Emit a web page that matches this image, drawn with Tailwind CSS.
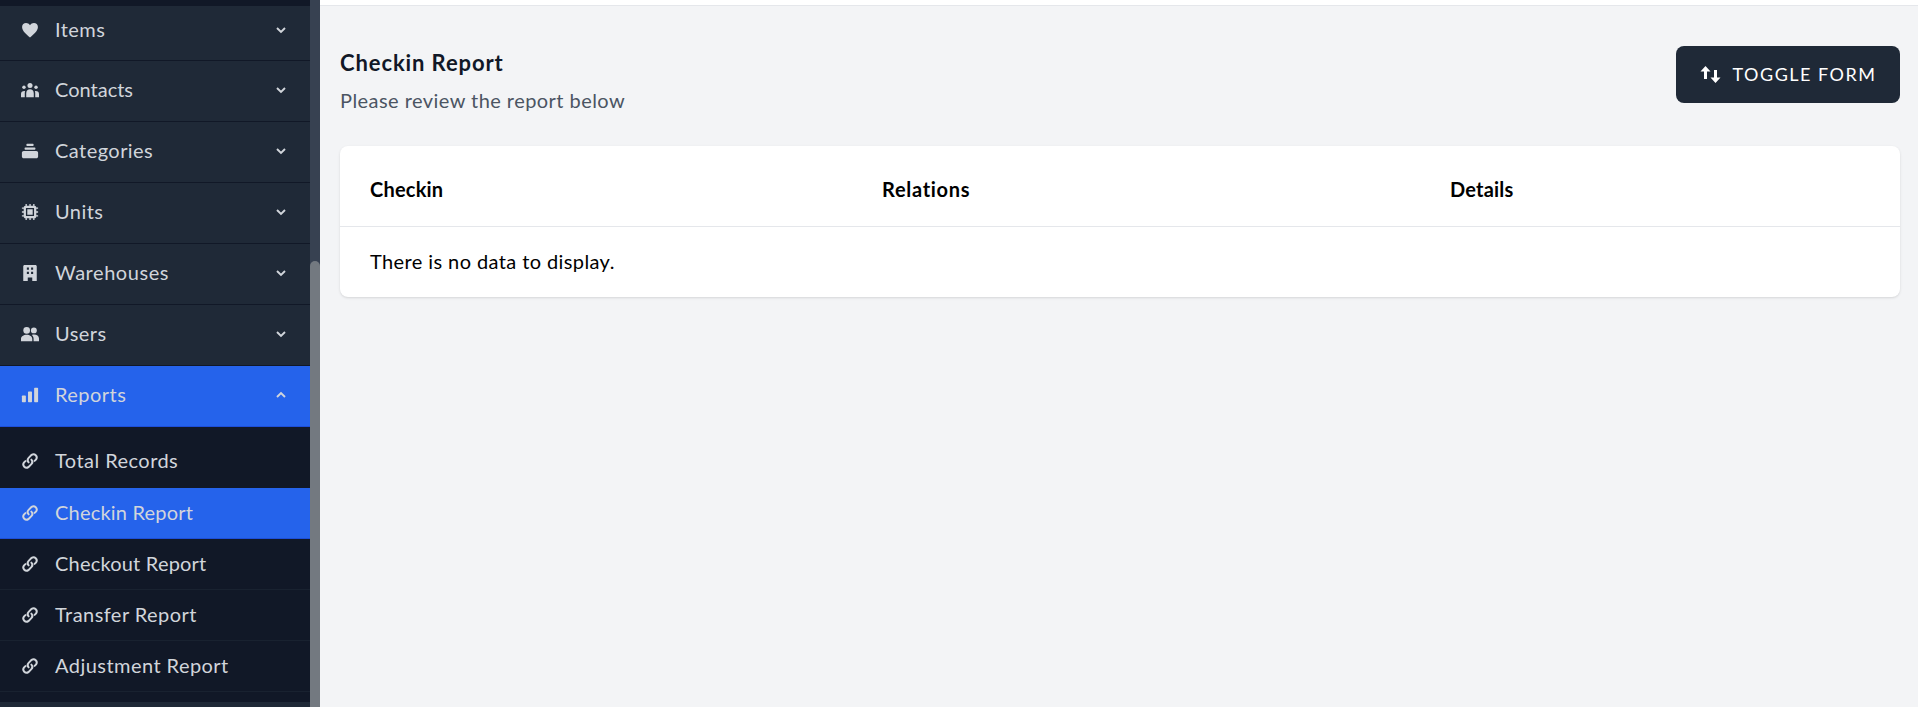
<!DOCTYPE html>
<html>
<head>
<meta charset="utf-8">
<script src="https://cdn.jsdelivr.net/npm/@tailwindcss/browser@4"></script>
</head>
<body class="h-[707px] w-[1918px] overflow-hidden bg-[#f3f4f6] font-['Lato','Open_Sans',sans-serif]">
<div class="flex h-[707px]">
  <aside class="flex h-full w-[320px] shrink-0">
    <nav class="flex h-full w-[310px] flex-col bg-[#1f2937] text-[20px] tracking-[0.45px] text-[#d1d5db]">
      <div class="h-[6px] bg-[#111827]"></div>
      <a class="flex h-[55px] items-center border-b border-[#111827] pb-[6px] pl-[21px] pr-[21px]">
        <svg class="h-[18px] w-[18px] shrink-0" viewBox="0 0 20 20" fill="currentColor"><path d="M1.2 6.6c0-2.6 2-4.4 4.4-4.4 1.8 0 3.4.9 4.4 2.4 1-1.5 2.6-2.4 4.4-2.4 2.4 0 4.4 1.8 4.4 4.4 0 4.8-5.3 8.6-8.8 11.6C6.500 15.200 1.200 11.400 1.200 6.600z"/></svg>
        <span class="ml-[16px] grow pb-[2px]">Items</span>
        <svg class="h-[16px] w-[16px]" viewBox="0 0 20 20" fill="none" stroke="currentColor" stroke-width="2.4"><path d="M5 7.500l5 5 5-5"/></svg>
      </a>
      <a class="flex h-[61px] items-center border-b border-[#111827] pb-[2px] pl-[21px] pr-[21px]">
        <svg class="h-[18px] w-[18px] shrink-0" viewBox="0 0 20 20" fill="currentColor"><circle cx="10" cy="5" r="2.800"/><circle cx="3.300" cy="7" r="1.900"/><circle cx="16.700" cy="7" r="1.900"/><path d="M5.800 18v-4.500c0-2.300 1.900-4.200 4.200-4.200s4.200 1.900 4.200 4.200V18zM0 18v-3.500c0-2.300 1.300-3.600 4.600-3.400-.3.800-.4 1.500-.4 2.400V18zM20 18v-3.500c0-2.300-1.300-3.600-4.600-3.400.3.800.4 1.500.4 2.400V18z"/></svg>
        <span class="ml-[16px] grow pb-[2px] tracking-[0px]">Contacts</span>
        <svg class="h-[16px] w-[16px]" viewBox="0 0 20 20" fill="none" stroke="currentColor" stroke-width="2.400"><path d="M5 7.500l5 5 5-5"/></svg>
      </a>
      <a class="flex h-[61px] items-center border-b border-[#111827] pb-[2px] pl-[21px] pr-[21px]">
        <svg class="h-[18px] w-[18px] shrink-0" viewBox="0 0 20 20" fill="currentColor"><rect x="6" y="2" width="8" height="2.500" rx=".8"/><rect x="4" y="6" width="12" height="2.500" rx=".8"/><path d="M3 10h14c1.100 0 2 .9 2 2v4c0 1.100-.9 2-2 2H3c-1.100 0-2-.9-2-2v-4c0-1.100.9-2 2-2z"/></svg>
        <span class="ml-[16px] grow pb-[2px]">Categories</span>
        <svg class="h-[16px] w-[16px]" viewBox="0 0 20 20" fill="none" stroke="currentColor" stroke-width="2.400"><path d="M5 7.500l5 5 5-5"/></svg>
      </a>
      <a class="flex h-[61px] items-center border-b border-[#111827] pb-[2px] pl-[21px] pr-[21px]">
        <svg class="h-[18px] w-[18px] shrink-0" viewBox="0 0 20 20" fill="currentColor"><path fill-rule="evenodd" d="M5 1h1.500v2h2.800V1h1.500v2h2.700V1H15v2c1.100 0 2 .9 2 2h2v1.500h-2v2.700h2v1.600h-2v2.700h2V15h-2c0 1.100-.9 2-2 2v2h-1.500v-2h-2.700v2H9.300v-2H6.500v2H5v-2c-1.100 0-2-.9-2-2H1v-1.500h2v-2.700H1V9.200h2V6.500H1V5h2c0-1.100.9-2 2-2zM5.500 5.500v9h9v-9zM7 7h6v6H7z"/></svg>
        <span class="ml-[16px] grow pb-[2px]">Units</span>
        <svg class="h-[16px] w-[16px]" viewBox="0 0 20 20" fill="none" stroke="currentColor" stroke-width="2.400"><path d="M5 7.500l5 5 5-5"/></svg>
      </a>
      <a class="flex h-[61px] items-center border-b border-[#111827] pb-[2px] pl-[21px] pr-[21px]">
        <svg class="h-[18px] w-[18px] shrink-0" viewBox="0 0 20 20" fill="currentColor"><path fill-rule="evenodd" d="M4 1h12c.8 0 1.500.7 1.500 1.500V19h-5v-4h-5v4h-5V2.500C2.500 1.700 3.200 1 4 1zM6.500 4v2.500h2.300V4zm4.700 0v2.500h2.300V4zM6.500 8.500V11h2.300V8.500zm4.700 0V11h2.300V8.500z"/></svg>
        <span class="ml-[16px] grow pb-[2px] tracking-[0.55px]">Warehouses</span>
        <svg class="h-[16px] w-[16px]" viewBox="0 0 20 20" fill="none" stroke="currentColor" stroke-width="2.400"><path d="M5 7.500l5 5 5-5"/></svg>
      </a>
      <a class="flex h-[61px] items-center border-b border-[#111827] pb-[2px] pl-[21px] pr-[21px]">
        <svg class="h-[18px] w-[18px] shrink-0" viewBox="0 0 20 20" fill="currentColor"><circle cx="6.300" cy="6" r="3.700"/><circle cx="14.300" cy="6" r="3.300"/><path d="M0 18v-2.500c0-3 2.800-4.800 6.300-4.800s6.200 1.800 6.200 4.800V18zM14 18v-2.500c0-1.900-.7-3.400-2-4.500.8-.3 1.600-.4 2.500-.4 3 0 5.500 1.700 5.500 4.500V18z"/></svg>
        <span class="ml-[16px] grow pb-[2px]">Users</span>
        <svg class="h-[16px] w-[16px]" viewBox="0 0 20 20" fill="none" stroke="currentColor" stroke-width="2.400"><path d="M5 7.500l5 5 5-5"/></svg>
      </a>
      <a class="flex h-[61px] items-center border-b border-[#1d4ed8] bg-[#2563eb] pb-[2px] pl-[21px] pr-[21px]">
        <svg class="h-[18px] w-[18px] shrink-0" viewBox="0 0 20 20" fill="currentColor"><rect x="1" y="10.500" width="4.400" height="7.500" rx=".8"/><rect x="7.800" y="6" width="4.400" height="12" rx=".8"/><rect x="14.600" y="2" width="4.400" height="16" rx=".8"/></svg>
        <span class="ml-[16px] grow pb-[2px]">Reports</span>
        <svg class="h-[16px] w-[16px]" viewBox="0 0 20 20" fill="none" stroke="currentColor" stroke-width="2.400"><path d="M5 12.500l5-5 5 5"/></svg>
      </a>
      <div class="bg-[#111827]">
        <a class="flex h-[61px] items-center pl-[21px] pt-[7px]">
          <svg class="h-[18px] w-[18px] shrink-0" viewBox="0 0 20 20" fill="none" stroke="currentColor" stroke-width="2.200" stroke-linecap="round"><path d="M11.500 8.500a3.600 3.600 0 0 1 0 5l-3.300 3.300a3.600 3.600 0 0 1-5-5l1.700-1.700M8.500 11.500a3.600 3.600 0 0 1 0-5l3.300-3.300a3.600 3.600 0 0 1 5 5l-1.700 1.700"/></svg>
          <span class="ml-[16px] pb-[2px]">Total Records</span>
        </a>
        <a class="flex h-[51px] items-center border-b border-[#1d4ed8] bg-[#2563eb] pl-[21px]">
          <svg class="h-[18px] w-[18px] shrink-0" viewBox="0 0 20 20" fill="none" stroke="currentColor" stroke-width="2.200" stroke-linecap="round"><path d="M11.500 8.500a3.600 3.600 0 0 1 0 5l-3.300 3.300a3.600 3.600 0 0 1-5-5l1.700-1.700M8.500 11.500a3.600 3.600 0 0 1 0-5l3.300-3.300a3.600 3.600 0 0 1 5 5l-1.700 1.700"/></svg>
          <span class="ml-[16px] pb-[3px] tracking-[0.2px]">Checkin Report</span>
        </a>
        <a class="flex h-[51px] items-center border-b border-[#1f2937]/60 pl-[21px]">
          <svg class="h-[18px] w-[18px] shrink-0" viewBox="0 0 20 20" fill="none" stroke="currentColor" stroke-width="2.200" stroke-linecap="round"><path d="M11.500 8.500a3.600 3.600 0 0 1 0 5l-3.300 3.300a3.600 3.600 0 0 1-5-5l1.700-1.700M8.500 11.500a3.600 3.600 0 0 1 0-5l3.300-3.300a3.600 3.600 0 0 1 5 5l-1.700 1.700"/></svg>
          <span class="ml-[16px] pb-[3px] tracking-[0.2px]">Checkout Report</span>
        </a>
        <a class="flex h-[51px] items-center border-b border-[#1f2937]/60 pl-[21px]">
          <svg class="h-[18px] w-[18px] shrink-0" viewBox="0 0 20 20" fill="none" stroke="currentColor" stroke-width="2.200" stroke-linecap="round"><path d="M11.500 8.500a3.600 3.600 0 0 1 0 5l-3.300 3.300a3.600 3.600 0 0 1-5-5l1.700-1.700M8.500 11.500a3.600 3.600 0 0 1 0-5l3.300-3.300a3.600 3.600 0 0 1 5 5l-1.700 1.700"/></svg>
          <span class="ml-[16px] pb-[3px]">Transfer Report</span>
        </a>
        <a class="flex h-[51px] items-center border-b border-[#1f2937]/60 pl-[21px]">
          <svg class="h-[18px] w-[18px] shrink-0" viewBox="0 0 20 20" fill="none" stroke="currentColor" stroke-width="2.200" stroke-linecap="round"><path d="M11.500 8.500a3.600 3.600 0 0 1 0 5l-3.300 3.300a3.600 3.600 0 0 1-5-5l1.700-1.700M8.500 11.500a3.600 3.600 0 0 1 0-5l3.300-3.300a3.600 3.600 0 0 1 5 5l-1.700 1.700"/></svg>
          <span class="ml-[16px] pb-[3px]">Adjustment Report</span>
        </a>
        <div class="h-[10px]"></div>
      </div>
    </nav>
    <div class="flex h-full w-[10px] flex-col bg-[#374151] pt-[261px]">
      <div class="grow rounded-t-[5px] bg-[#737980]"></div>
    </div>
  </aside>
  <main class="flex min-w-0 grow flex-col">
    <div class="h-[6px] border-b border-[#e5e7eb] bg-white"></div>
    <div class="pl-[20px] pr-[18px] pt-[39px]">
      <div class="flex items-start justify-between">
        <div>
          <h1 class="text-[22px] leading-[36px] font-bold tracking-[0.9px] text-[#111827]">Checkin Report</h1>
          <p class="mt-[1px] text-[20px] leading-[36px] tracking-[0.45px] text-[#4b5563]">Please review the report below</p>
        </div>
        <div class="pt-[1px]">
        <button class="flex h-[57px] w-[224px] items-center justify-center rounded-lg bg-[#1f2937] text-[18px] tracking-[1.5px] text-white">
          <svg class="mr-[12px] h-[17px] w-[21px]" viewBox="0 0 21 17" fill="currentColor"><path d="M5.500 0l5 5.500H7V13H4V5.500H.5zM15.500 17l5-5.500H17V4h-3v7.500h-3.500z"/></svg>
          TOGGLE FORM
        </button>
        </div>
      </div>
      <section class="mt-[28px] rounded-lg bg-white text-black shadow-sm">
        <div class="flex h-[81px] items-center border-b border-[#e5e7eb] pt-[5px] text-[20px] font-bold tracking-[0.2px]">
          <div class="w-[542px] pl-[30px]">Checkin</div>
          <div class="w-[568px] tracking-[0.7px]">Relations</div>
          <div class="grow">Details</div>
        </div>
        <div class="flex h-[70px] items-center pb-[2px] pl-[30px] text-[20px] tracking-[0.4px]">There is no data to display.</div>
      </section>
    </div>
  </main>
</div>
</body>
</html>
